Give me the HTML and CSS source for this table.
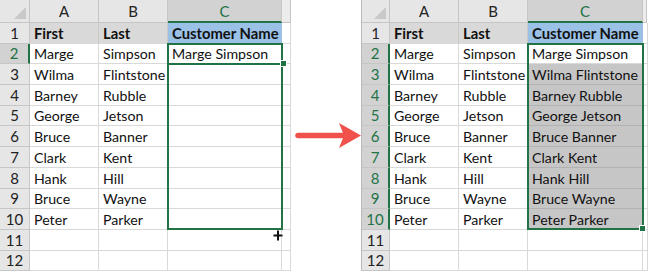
FILE: index.html
```html
<!DOCTYPE html>
<html>
<head>
<meta charset="utf-8">
<link rel="stylesheet" href="styles.css">
</head>
<body>
<div class="sheet sheet-left">
  <div class="row hrow"><div class="corner"><span class="tri"></span></div><div class="ch">A</div><div class="ch">B</div><div class="ch sel">C</div><div class="ch dcol"></div></div>
  <div class="row"><div class="rh">1</div><div class="c grey b">First</div><div class="c grey b">Last</div><div class="c blue b">Customer Name</div><div class="c"></div></div>
  <div class="row"><div class="rh sel">2</div><div class="c">Marge</div><div class="c">Simpson</div><div class="c">Marge Simpson</div><div class="c"></div></div>
  <div class="row"><div class="rh">3</div><div class="c">Wilma</div><div class="c">Flintstone</div><div class="c"></div><div class="c"></div></div>
  <div class="row"><div class="rh">4</div><div class="c">Barney</div><div class="c">Rubble</div><div class="c"></div><div class="c"></div></div>
  <div class="row"><div class="rh">5</div><div class="c">George</div><div class="c">Jetson</div><div class="c"></div><div class="c"></div></div>
  <div class="row"><div class="rh">6</div><div class="c">Bruce</div><div class="c">Banner</div><div class="c"></div><div class="c"></div></div>
  <div class="row"><div class="rh">7</div><div class="c">Clark</div><div class="c">Kent</div><div class="c"></div><div class="c"></div></div>
  <div class="row"><div class="rh">8</div><div class="c">Hank</div><div class="c">Hill</div><div class="c"></div><div class="c"></div></div>
  <div class="row"><div class="rh">9</div><div class="c">Bruce</div><div class="c">Wayne</div><div class="c"></div><div class="c"></div></div>
  <div class="row"><div class="rh">10</div><div class="c">Peter</div><div class="c">Parker</div><div class="c"></div><div class="c"></div></div>
  <div class="row"><div class="rh">11</div><div class="c"></div><div class="c"></div><div class="c"></div><div class="c"></div></div>
  <div class="row"><div class="rh">12</div><div class="c"></div><div class="c"></div><div class="c"></div><div class="c"></div></div>

  <div class="selbox"></div>
  <div class="activeline"><span class="handle"></span></div>
  <svg class="cursor" width="12" height="13" viewBox="0 0 12 13"><path d="M6 1 V12 M1 6.5 H11" stroke="#fff" stroke-width="4"/><path d="M6 1.5 V11.5 M1.5 6.5 H10.5" stroke="#111" stroke-width="2"/></svg>
</div>

<svg class="arrow" width="70" height="273" viewBox="0 0 70 273">
  <line x1="7" y1="135.5" x2="53" y2="135.5" stroke="#f0514a" stroke-width="5.5" stroke-linecap="round"/>
  <polygon points="48,123 70,135.5 48,148 53,135.5" fill="#f0514a"/>
</svg>

<div class="sheet sheet-right">
  <div class="row hrow"><div class="corner"><span class="tri"></span></div><div class="ch">A</div><div class="ch">B</div><div class="ch sel">C</div><div class="ch dcol"></div></div>
  <div class="row"><div class="rh">1</div><div class="c grey b">First</div><div class="c grey b">Last</div><div class="c blue b">Customer Name</div><div class="c"></div></div>
  <div class="row"><div class="rh sel">2</div><div class="c">Marge</div><div class="c">Simpson</div><div class="c">Marge Simpson</div><div class="c"></div></div>
  <div class="row"><div class="rh sel">3</div><div class="c">Wilma</div><div class="c">Flintstone</div><div class="c hl">Wilma Flintstone</div><div class="c"></div></div>
  <div class="row"><div class="rh sel">4</div><div class="c">Barney</div><div class="c">Rubble</div><div class="c hl">Barney Rubble</div><div class="c"></div></div>
  <div class="row"><div class="rh sel">5</div><div class="c">George</div><div class="c">Jetson</div><div class="c hl">George Jetson</div><div class="c"></div></div>
  <div class="row"><div class="rh sel">6</div><div class="c">Bruce</div><div class="c">Banner</div><div class="c hl">Bruce Banner</div><div class="c"></div></div>
  <div class="row"><div class="rh sel">7</div><div class="c">Clark</div><div class="c">Kent</div><div class="c hl">Clark Kent</div><div class="c"></div></div>
  <div class="row"><div class="rh sel">8</div><div class="c">Hank</div><div class="c">Hill</div><div class="c hl">Hank Hill</div><div class="c"></div></div>
  <div class="row"><div class="rh sel">9</div><div class="c">Bruce</div><div class="c">Wayne</div><div class="c hl">Bruce Wayne</div><div class="c"></div></div>
  <div class="row"><div class="rh sel">10</div><div class="c">Peter</div><div class="c">Parker</div><div class="c hl">Peter Parker</div><div class="c"></div></div>
  <div class="row"><div class="rh">11</div><div class="c"></div><div class="c"></div><div class="c"></div><div class="c"></div></div>
  <div class="row"><div class="rh">12</div><div class="c"></div><div class="c"></div><div class="c"></div><div class="c"></div></div>

  <div class="selbox"><span class="handle"></span></div>
</div>
</body>
</html>
```

FILE: styles.css
```css
html, body {
  margin: 0;
  padding: 0;
  background: #fff;
}
body {
  width: 650px;
  height: 273px;
  overflow: hidden;
  display: flex;
  align-items: flex-start;
  font-family: Lato, "Noto Sans", sans-serif;
  font-size: 14.2px;
  color: #111;
}
.sheet {
  display: flex;
  flex-direction: column;
  position: relative;
  flex: none;
}
.row {
  display: grid;
  height: 20.7px;
}
.row.hrow {
  height: 23px;
}
.sheet-left .row {
  grid-template-columns: 30px 69px 69px 114px 9px;
}
.sheet-right {
  border-left: 1px solid #b9b9b9;
}
.sheet-right .row {
  grid-template-columns: 28px 69px 69px 115px 4px;
}
.arrow {
  flex: none;
  display: block;
}
.corner {
  background: #e6e6e6;
  border-right: 1px solid #c6c6c6;
  border-bottom: 1px solid #c6c6c6;
  box-sizing: border-box;
  position: relative;
}
.tri {
  position: absolute;
  right: 3px;
  bottom: 3px;
  width: 12px;
  height: 12px;
  background: #c9c9c9;
  clip-path: polygon(100% 0, 100% 100%, 0 100%);
}
.ch {
  background: #e6e6e6;
  border-right: 1px solid #c6c6c6;
  border-bottom: 1px solid #c6c6c6;
  box-sizing: border-box;
  display: flex;
  align-items: flex-end;
  justify-content: center;
  padding-bottom: 2px;
  color: #222;
  font-size: 15px;
}
.ch.sel {
  background: #d2d2d2;
  color: #217346;
  border-bottom: 2px solid #217346;
  padding-bottom: 1px;
}
.ch.dcol {
  background: #ececec;
}
.rh {
  background: #e6e6e6;
  border-right: 1px solid #c6c6c6;
  border-bottom: 1px solid #c6c6c6;
  box-sizing: border-box;
  display: flex;
  align-items: flex-end;
  justify-content: center;
  padding-bottom: 1px;
  color: #222;
  font-size: 15px;
}
.rh.sel {
  background: #d2d2d2;
  color: #217346;
  border-right: 2px solid #217346;
}
.c {
  border-right: 1px solid #d9d9d9;
  border-bottom: 1px solid #d9d9d9;
  box-sizing: border-box;
  display: flex;
  align-items: flex-end;
  padding: 0 0 1px 4px;
  white-space: nowrap;
  min-width: 0;
}
.c.b {
  font-weight: 700;
  font-size: 14.8px;
}
.c.grey {
  background: #d9d9d9;
  border-right-color: #c9c9c9;
}
.c.blue {
  background: #9bc2e6;
  border-right-color: #9bc2e6;
}
.c.hl {
  background: #c6c6c6;
  border-bottom-color: #b2b2b2;
}
.selbox {
  position: absolute;
  top: 42.7px;
  height: 187.3px;
  box-sizing: border-box;
  border: 2px solid #217346;
  z-index: 2;
}
.sheet-left .selbox {
  left: 167px;
  width: 116px;
  border-width: 2.5px;
}
.sheet-right .selbox {
  left: 165px;
  width: 117px;
}
.activeline {
  position: absolute;
  top: 42.7px;
  left: 167px;
  width: 116px;
  height: 22.7px;
  box-sizing: border-box;
  border-bottom: 2px solid #217346;
  z-index: 3;
}
.handle {
  position: absolute;
  right: -4px;
  bottom: -4px;
  width: 5px;
  height: 5px;
  background: #217346;
  border: 1px solid #fff;
}
.cursor {
  position: absolute;
  left: 272px;
  top: 229px;
  z-index: 4;
}
```
